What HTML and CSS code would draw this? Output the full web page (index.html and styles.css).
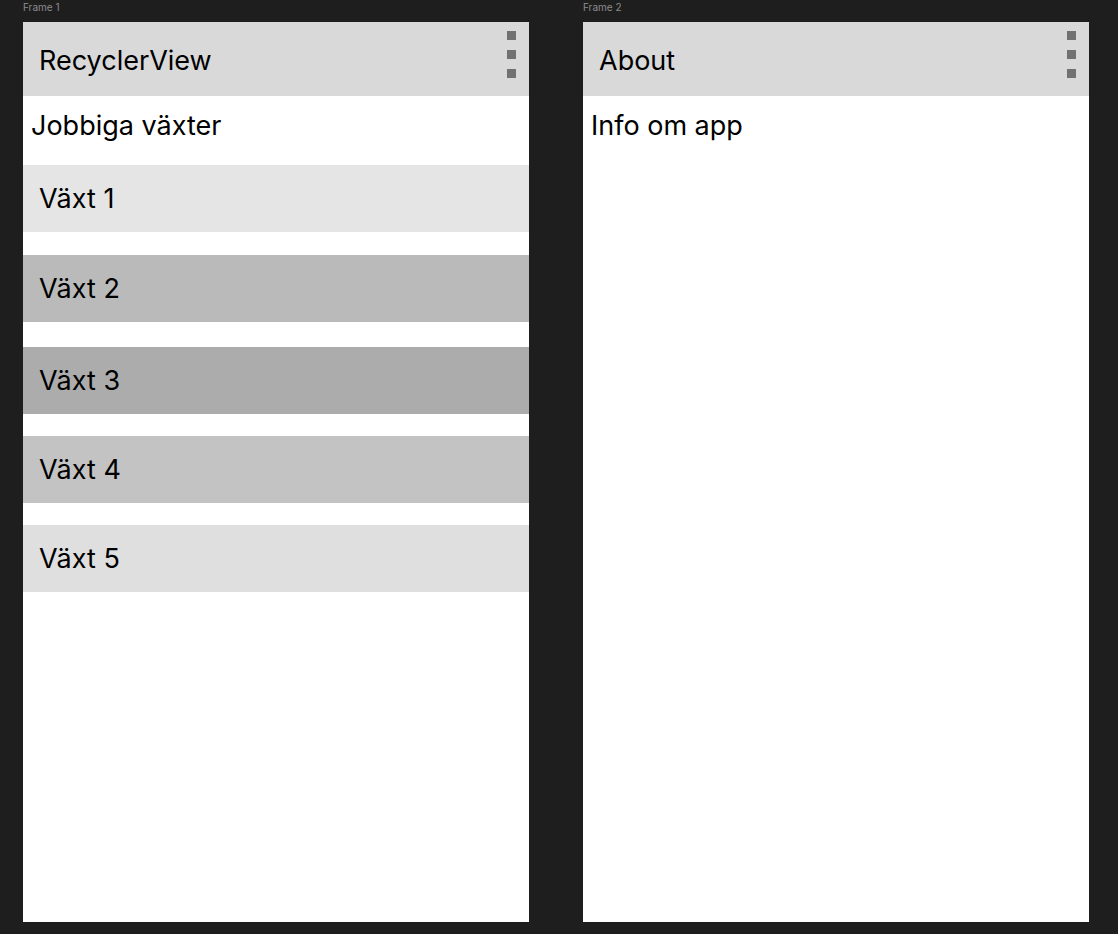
FILE: index.html
```html
<!DOCTYPE html>
<html>
<head>
<meta charset="utf-8">
<link rel="stylesheet" href="styles.css">
</head>
<body>
<div class="canvas">
  <div class="frame-col">
    <div class="frame-label">Frame 1</div>
    <div class="frame">
      <div class="appbar">
        <span class="appbar-title">RecyclerView</span>
        <div class="menu"><i></i><i></i><i></i></div>
      </div>
      <div class="heading">Jobbiga växter</div>
      <div class="list">
        <div class="item item-1">Växt 1</div>
        <div class="item item-2">Växt 2</div>
        <div class="item item-3">Växt 3</div>
        <div class="item item-4">Växt 4</div>
        <div class="item item-5">Växt 5</div>
      </div>
    </div>
  </div>
  <div class="frame-col">
    <div class="frame-label">Frame 2</div>
    <div class="frame">
      <div class="appbar">
        <span class="appbar-title">About</span>
        <div class="menu"><i></i><i></i><i></i></div>
      </div>
      <div class="heading">Info om app</div>
    </div>
  </div>
</div>
</body>
</html>
```
FILE: styles.css
```css
html, body {
  margin: 0;
  padding: 0;
  background: #1e1e1e;
  font-family: Inter, "Liberation Sans", sans-serif;
}
.canvas {
  display: flex;
  gap: 54px;
  padding-left: 23px;
}
.frame-col {
  display: flex;
  flex-direction: column;
  width: 506px;
}
.frame-label {
  height: 22px;
  font-size: 10px;
  line-height: 14px;
  color: #8c8c8c;
}
.frame {
  background: #ffffff;
  height: 900px;
  display: flex;
  flex-direction: column;
}
.appbar {
  background: #d9d9d9;
  height: 74px;
  display: flex;
  align-items: center;
  justify-content: space-between;
  padding-left: 16px;
  padding-right: 13px;
}
.appbar-title {
  font-size: 27px;
  color: #000;
  margin-top: 2px;
}
.menu {
  display: flex;
  flex-direction: column;
  gap: 10px;
  align-self: flex-start;
  padding-top: 9px;
}
.menu i {
  display: block;
  width: 9px;
  height: 9px;
  background: #717171;
}
.heading {
  font-size: 27px;
  color: #000;
  padding-left: 8px;
  height: 69px;
  line-height: 60px;
}
.list {
  display: flex;
  flex-direction: column;
}
.item {
  height: 67px;
  display: flex;
  align-items: center;
  padding-left: 16px;
  font-size: 27px;
  color: #000;
}
.item-1 { background: #e5e5e5; }
.item-2 { background: #bababa; margin-top: 23px; }
.item-3 { background: #acacac; margin-top: 25px; }
.item-4 { background: #c3c3c3; margin-top: 22px; }
.item-5 { background: #dfdfdf; margin-top: 22px; }
```
